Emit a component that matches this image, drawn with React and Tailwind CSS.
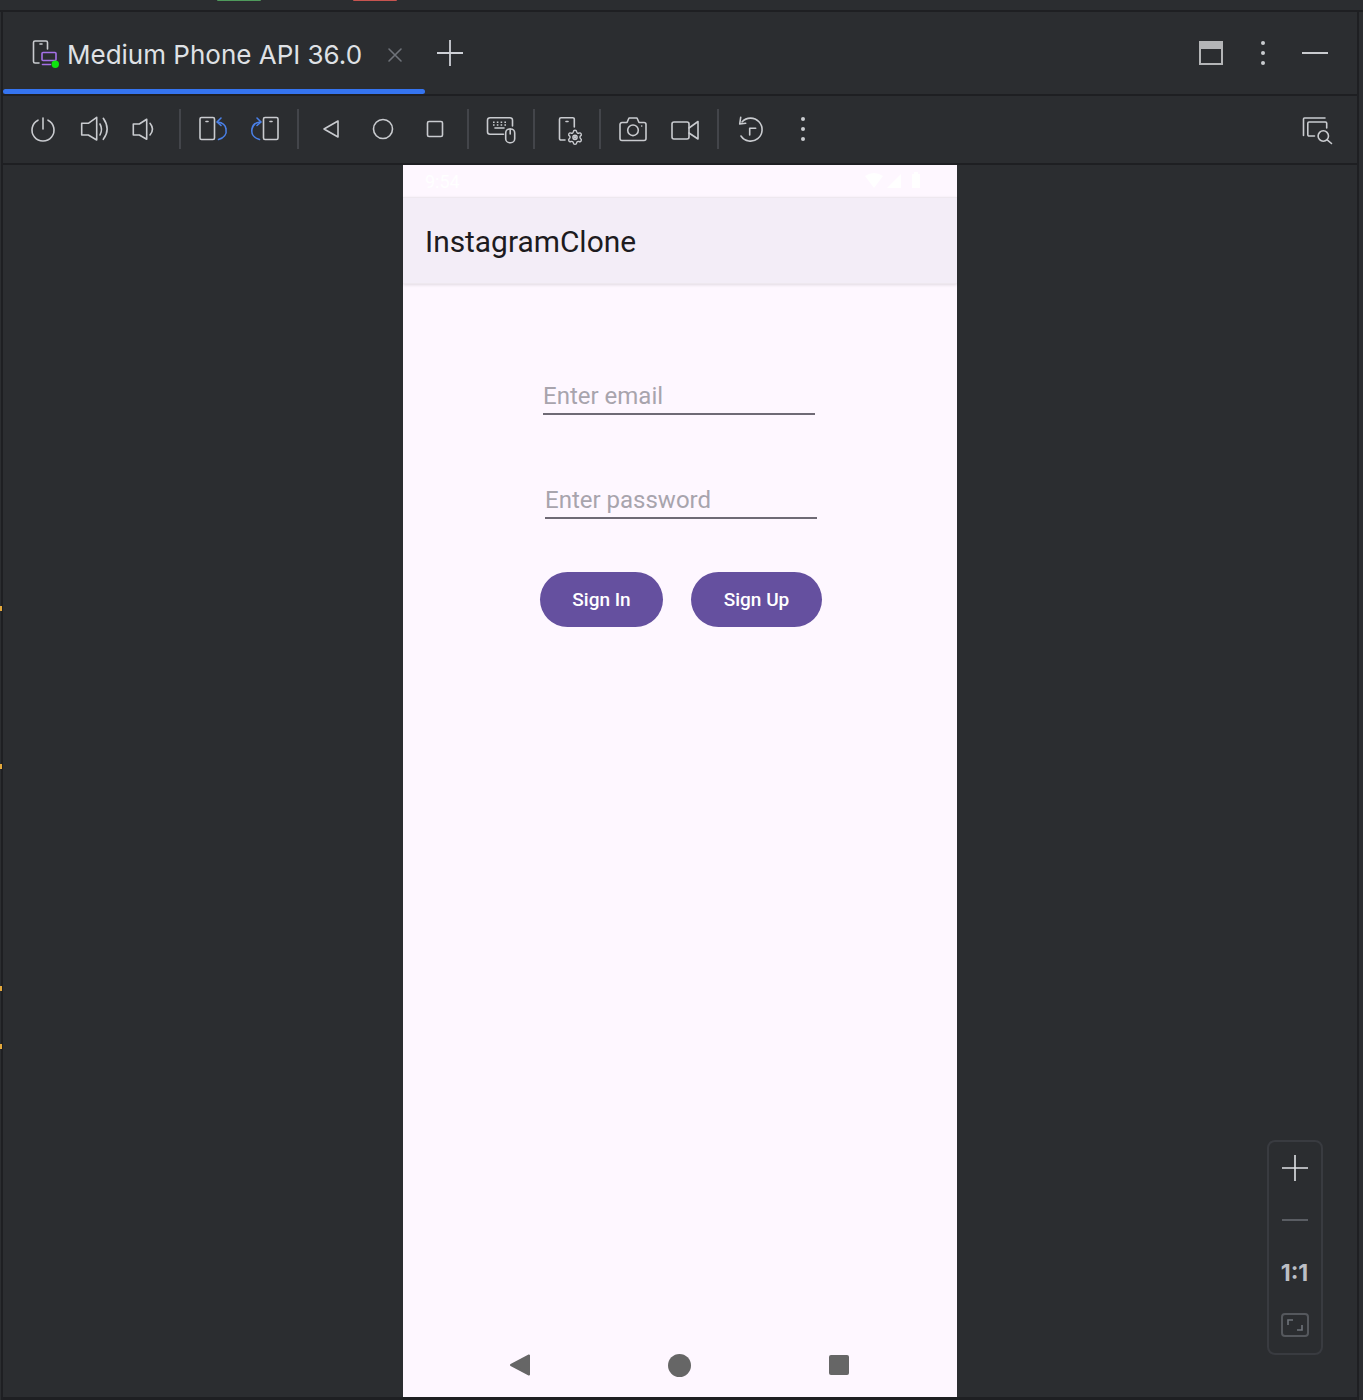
import React from 'react';
import { Settings } from 'lucide-react';

const GREY = '#c9cbcf';
const BLUE = '#4a80e8';

// every toolbar icon sits in a 28x28 box
function Icon({ children, className = '' }) {
  return (
    <svg
      viewBox="0 0 28 28"
      fill="none"
      stroke={GREY}
      strokeWidth="1.6"
      strokeLinecap="round"
      strokeLinejoin="round"
      className={`w-7 h-7 shrink-0 overflow-visible ${className}`}
    >
      {children}
    </svg>
  );
}

function Sep({ className = '' }) {
  return <div className={`w-0.5 h-10 bg-[#43454a] shrink-0 ${className}`} />;
}

function Dots() {
  return (
    <>
      <circle cx="14" cy="4" r="2" fill={GREY} stroke="none" />
      <circle cx="14" cy="14" r="2" fill={GREY} stroke="none" />
      <circle cx="14" cy="24" r="2" fill={GREY} stroke="none" />
    </>
  );
}

function RotatePhone({ flip }) {
  return (
    <Icon>
      <g transform={flip ? 'matrix(-1 0 0 1 28 0)' : undefined}>
        <rect x="1" y="2.5" width="14.5" height="22" rx="1.5" />
        <path d="M7 6.5h2" />
        <g stroke={BLUE}>
          <path d="M19.5 24.5C25 23 28 19 27 14C26.5 10 23 7.5 18.5 7" />
          <path d="M22 3L18 7L22 10.5" />
        </g>
      </g>
    </Icon>
  );
}

function TabIcon() {
  return (
    <svg viewBox="0 0 28 28" fill="none" strokeLinecap="round" strokeLinejoin="round" className="w-7 h-7 shrink-0 overflow-visible">
      <path d="M9 24H5a1.5 1.5 0 0 1-1.5-1.5V3.5A1.5 1.5 0 0 1 5 2h11a1.5 1.5 0 0 1 1.5 1.5V10" stroke={GREY} strokeWidth="1.6" />
      <path d="M10 5h2" stroke={GREY} strokeWidth="1.6" />
      <rect x="12" y="13.5" width="14" height="8" rx="1" stroke="#a571e6" strokeWidth="1.6" />
      <path d="M12.5 25.5h8" stroke="#a571e6" strokeWidth="1.6" />
      <circle cx="25.3" cy="25.3" r="3.7" fill="#0ee50e" />
    </svg>
  );
}

function Toolbar() {
  return (
    <div className="h-[69px] flex items-center pl-[26px] pr-[26px] pb-0.5 border-b-2 border-[#1e1f22]">
      <Icon>
        <path d="M9 5.2A11 11 0 1 0 19 5.2" />
        <path d="M14 3v11" />
      </Icon>
      <Icon className="ml-[23px]">
        <path d="M1.7 8.3H8.3L16.7 2.3V25L8.3 20H1.7Z" />
        <path d="M20 9Q23 14.3 20 20" />
        <path d="M23.3 3.3Q31 14.3 23.3 24.3" />
      </Icon>
      <Icon className="ml-[22px]">
        <path d="M3.3 9H9.3L16.7 4.3V24.3L9.3 20H3.3Z" />
        <path d="M20 8.3Q25 14.3 20 20" />
      </Icon>
      <Sep className="ml-[21px]" />
      <div className="ml-[18px]"><RotatePhone /></div>
      <div className="ml-6"><RotatePhone flip /></div>
      <Sep className="ml-[18px]" />
      <Icon className="ml-[18px]">
        <path d="M7 14L21 6V22Z" />
      </Icon>
      <Icon className="ml-6">
        <circle cx="14" cy="14" r="9.5" />
      </Icon>
      <Icon className="ml-6">
        <rect x="6.5" y="6.5" width="15" height="15" rx="1.5" />
      </Icon>
      <Sep className="ml-[18px]" />
      <Icon className="ml-[18px]">
        <path d="M16.5 19.3H3a2.5 2.5 0 0 1-2.5-2.5V5.2A2.5 2.5 0 0 1 3 2.7H23a2.5 2.5 0 0 1 2.5 2.5V11" />
        <path d="M6 7.3H20.5M6 10H20.5" strokeDasharray="1.6 2.2" strokeLinecap="butt" />
        <path d="M8 13h9" />
        <rect x="18.7" y="14" width="9" height="13.7" rx="4" />
        <path d="M23.2 14v5" />
      </Icon>
      <Sep className="ml-[18px]" />
      <Icon className="ml-[21px]">
        <path d="M9 25H5a1.5 1.5 0 0 1-1.5-1.5V4.2A1.5 1.5 0 0 1 5 2.7H16.8a1.5 1.5 0 0 1 1.5 1.5V12" />
        <path d="M10 6.5h2" />
        <Settings x="10.5" y="13.8" width="17" height="17" strokeWidth="2" color={GREY} />
        <circle cx="19" cy="22.3" r="1.4" fill={GREY} stroke="none" />
      </Icon>
      <Sep className="ml-[15px]" />
      <Icon className="ml-[18px]">
        <path d="M3 7.5H8L10 3H18L20 7.5H25a2 2 0 0 1 2 2V23.5a2 2 0 0 1-2 2H3a2 2 0 0 1-2-2V9.5a2 2 0 0 1 2-2Z" />
        <circle cx="14" cy="15.3" r="5.3" />
        <circle cx="22.7" cy="11" r="0.8" fill={GREY} stroke="none" />
      </Icon>
      <Icon className="ml-6">
        <rect x="1" y="7" width="17" height="17" rx="2" />
        <path d="M18 13L27 6.5V24L18 18" />
      </Icon>
      <Sep className="ml-[18px]" />
      <Icon className="ml-[17px]">
        <path d="M6 7A11.5 11.5 0 1 1 5 21" />
        <path d="M4.7 2.3L3.7 9L9.7 8.3" />
        <path d="M13.7 20V13.3H19.7" />
      </Icon>
      <Icon className="ml-[25px]">
        <Dots />
      </Icon>
      <Icon className="ml-auto">
        <path d="M0.5 20.5V4a1 1 0 0 1 1-1H22" />
        <path d="M11.5 21H6a1.2 1.2 0 0 1-1.2-1.2V8.2A1.2 1.2 0 0 1 6 7H22.5a1.2 1.2 0 0 1 1.2 1.2V13" />
        <circle cx="20.3" cy="21" r="5.2" />
        <path d="M24.2 24.8L28.5 28.5" />
      </Icon>
    </div>
  );
}

function TabBar() {
  return (
    <div className="relative h-[84px] flex items-center border-b-2 border-[#1e1f22] pl-[27px] pr-[29px]">
      <TabIcon />
      <span className="ml-[9px] mt-[3px] text-[26px] leading-none text-[#dfe1e5] font-['Inter',sans-serif]">Medium Phone API 36.0</span>
      <svg viewBox="0 0 16 16" className="w-4 h-4 ml-[25px] mt-[3px]" stroke="#6f737a" strokeWidth="1.6" strokeLinecap="round">
        <path d="M2 2L14 14M14 2L2 14" />
      </svg>
      <svg viewBox="0 0 26 26" className="w-[26px] h-[26px] ml-[34px]" stroke="#ced0d6" strokeWidth="1.8">
        <path d="M13 0V26M0 13H26" />
      </svg>
      <div className="ml-auto flex items-center">
        <div className="w-6 h-6 border-2 border-[#b4b5b7] border-t-[8px]" />
        <Icon className="ml-[26px]">
          <Dots />
        </Icon>
        <div className="w-[26px] h-0.5 bg-[#c9cbcf] ml-[25px]" />
      </div>
      <div className="absolute left-0 bottom-0 w-[422px] h-[5px] rounded-full bg-[#3574f0]" />
    </div>
  );
}

function LoginField({ label, className }) {
  return (
    <div className={`w-[272px] border-b-2 border-[#6f6a75] h-[36px] flex items-center ${className}`}>
      <span className="text-[24px] leading-none text-[#a8a4ad]">{label}</span>
    </div>
  );
}

function Phone() {
  return (
    <div className="w-[554px] h-[1232px] flex flex-col bg-[#fef7ff] font-['Roboto',sans-serif]">
      <div className="h-[32px] flex items-center justify-between pl-[22px] pr-[36px] text-white text-[18px]">
        <span>9:54</span>
        <svg viewBox="0 0 56 18" className="w-14 h-[18px]" fill="#ffffff">
          <path d="M0 4Q9-2 18 4L9 16Z" />
          <path d="M36 2V16H22Z" />
          <path d="M47 2h2V0h4v2h2V16H47Z" />
        </svg>
      </div>
      <div className="h-[87px] flex items-center px-[22px] pt-[2px] bg-[#f3edf7] border-y border-[#eee8ef] shadow-[0_1px_3px_rgba(0,0,0,0.12)]">
        <span className="text-[29.9px] leading-none text-[#1d1b20]">InstagramClone</span>
      </div>
      <div className="flex-1 flex flex-col pt-[95px]">
        <LoginField label="Enter email" className="ml-[140px]" />
        <LoginField label="Enter password" className="ml-[142px] mt-[68px]" />
        <div className="flex ml-[137px] mt-[53px] gap-7">
          <button className="w-[123px] h-[55px] pt-px rounded-full bg-[#65509f] text-white text-[19px] font-medium">Sign In</button>
          <button className="w-[131px] h-[55px] pt-px rounded-full bg-[#65509f] text-white text-[19px] font-medium">Sign Up</button>
        </div>
      </div>
      <div className="h-[64px] flex items-center pl-[106px]">
        <svg viewBox="0 0 22 22" className="w-[22px] h-[22px]" fill="#666666" stroke="#666666" strokeWidth="2" strokeLinejoin="round">
          <path d="M2 11L20 1.5V20.5Z" />
        </svg>
        <div className="w-[23px] h-[23px] rounded-full bg-[#666666] ml-[137px]" />
        <div className="w-5 h-5 rounded-[2px] bg-[#666666] ml-[138px]" />
      </div>
    </div>
  );
}

function ZoomControls() {
  return (
    <div className="absolute left-[1267px] top-[1140px] w-14 h-[215px] pr-px rounded-lg border-2 border-[#393b40] flex flex-col items-center">
      <svg viewBox="0 0 26 26" className="w-[26px] h-[26px] mt-[13px]" stroke="#dfe1e5" strokeWidth="1.6">
        <path d="M13 0V26M0 13H26" />
      </svg>
      <div className="w-[26px] h-0.5 bg-[#5a5d63] mt-[38px]" />
      <span className="mt-[41px] text-[23px] leading-none font-bold text-[#bcbec4] font-['Inter',sans-serif]">1:1</span>
      <div className="mt-[28px] w-7 h-6 rounded-[4px] border-2 border-[#55585d] flex items-center justify-center">
        <svg viewBox="0 0 16 12" className="w-4 h-3" fill="none" stroke="#6f737a" strokeWidth="1.6">
          <path d="M1 6V1H6M15 6V11H10" />
        </svg>
      </div>
    </div>
  );
}

export default function App() {
  return (
    <div className="relative w-[1363px] h-[1400px] overflow-hidden bg-[#2b2d30]">
      <div className="h-3 border-b-2 border-[#1e1f22] flex">
        <div className="ml-[217px] w-11 h-px rounded-b bg-[#4f9a5c]" />
        <div className="ml-[92px] w-11 h-px rounded-b bg-[#c75450]" />
      </div>
      <div className="ml-[1px] mr-[4px] h-[1388px] border-x-2 border-b-[3px] border-[#1e1f22]">
        <TabBar />
        <Toolbar />
        <div className="pl-[400px]">
          <Phone />
        </div>
      </div>
      <div className="absolute left-0 top-[606px] w-0.5 h-[5px] bg-[#e5a93c]" />
      <div className="absolute left-0 top-[764px] w-0.5 h-[5px] bg-[#e5a93c]" />
      <div className="absolute left-0 top-[986px] w-0.5 h-[5px] bg-[#e5a93c]" />
      <div className="absolute left-0 top-[1044px] w-0.5 h-[5px] bg-[#e5a93c]" />
      <ZoomControls />
    </div>
  );
}
